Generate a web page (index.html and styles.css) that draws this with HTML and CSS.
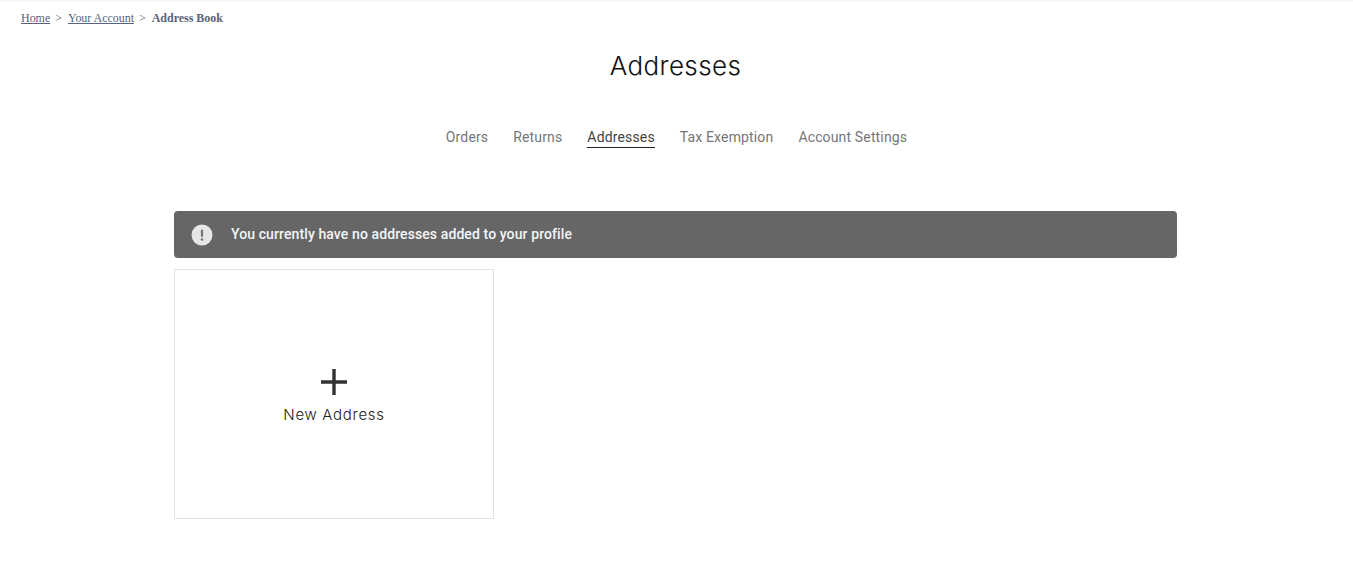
FILE: index.html
```html
<!DOCTYPE html>
<html lang="en">
<head>
<meta charset="utf-8">
<title>Addresses</title>
<link rel="stylesheet" href="styles.css">
</head>
<body>
<nav class="crumbs">
  <a href="#">Home</a><span class="sep">&gt;</span><a href="#">Your Account</a><span class="sep">&gt;</span><strong>Address Book</strong>
</nav>
<h1 class="title">Addresses</h1>
<ul class="tabs">
  <li><a href="#">Orders</a></li>
  <li><a href="#">Returns</a></li>
  <li><a href="#" class="active">Addresses</a></li>
  <li><a href="#">Tax Exemption</a></li>
  <li><a href="#">Account Settings</a></li>
</ul>
<main class="content">
  <div class="alert">
    <svg class="alert-icon" width="22" height="22" viewBox="0 0 22 22" aria-hidden="true">
      <circle cx="11" cy="11" r="10.5" fill="#e6e6e6"/>
      <rect x="9.9" y="5.5" width="2.2" height="7.5" rx="1" fill="#777"/>
      <circle cx="11" cy="15.5" r="1.3" fill="#777"/>
    </svg>
    <span class="alert-text">You currently have no addresses added to your profile</span>
  </div>
  <a href="#" class="new-card">
    <svg class="plus" width="26" height="26" viewBox="0 0 26 26" aria-hidden="true">
      <path d="M0 13H26M13 0V26" stroke="#333" stroke-width="3.4" fill="none"/>
    </svg>
    <span class="new-label">New Address</span>
  </a>
</main>
</body>
</html>
```
FILE: styles.css
```css
* { box-sizing: border-box; }
html, body { margin: 0; padding: 0; }
body {
  height: 579px;
  overflow: hidden;
  background: #fff;
  border-top: 2px solid #f7f7f7;
  font-family: "Inter", "Liberation Sans", sans-serif;
}
a { color: inherit; text-decoration: none; }

.crumbs {
  display: flex;
  align-items: baseline;
  padding: 9px 21px 0;
  height: 27px;
  font: 12px/14px "Liberation Serif", serif;
  color: #56637a;
}
.crumbs a { text-decoration: underline; letter-spacing: -0.04px; }
.crumbs .sep { margin: 0 6px 0 5px; color: #555; }
.crumbs strong { font-weight: 700; letter-spacing: -0.02px; }

.title {
  margin: 19px 0 0;
  padding-right: 2px;
  height: 40px;
  text-align: center;
  font: 300 26px/36px "Inter", sans-serif;
  letter-spacing: 0.4px;
  color: #111;
}

.tabs {
  display: flex;
  justify-content: center;
  gap: 25px;
  list-style: none;
  margin: 39px 0 0;
  padding: 0;
  font: 400 14px/20px "Roboto", sans-serif;
  letter-spacing: 0.15px;
  color: #767676;
}
.tabs a { display: block; height: 21px; }
.tabs .active { color: #444; border-bottom: 1px solid #222; }

.content {
  width: 1003px;
  margin: 63px 0 0 174px;
}
.alert {
  display: flex;
  align-items: center;
  gap: 18px;
  height: 47px;
  padding-left: 17px;
  border-radius: 4px;
  background: #666;
  color: #f5f5f5;
  font: 500 14px/20px "Roboto", sans-serif;
  letter-spacing: 0.1px;
}
.alert-icon { flex: none; }
.alert-text { margin-bottom: 2px; }

.new-card {
  display: flex;
  flex-direction: column;
  align-items: center;
  width: 320px;
  height: 250px;
  margin-top: 11px;
  padding-top: 99px;
  border: 1px solid #e2e2e2;
  color: #222;
}
.new-label {
  margin-top: 10px;
  font: 300 15px/20px "Inter", sans-serif;
  letter-spacing: 0.7px;
}
```
